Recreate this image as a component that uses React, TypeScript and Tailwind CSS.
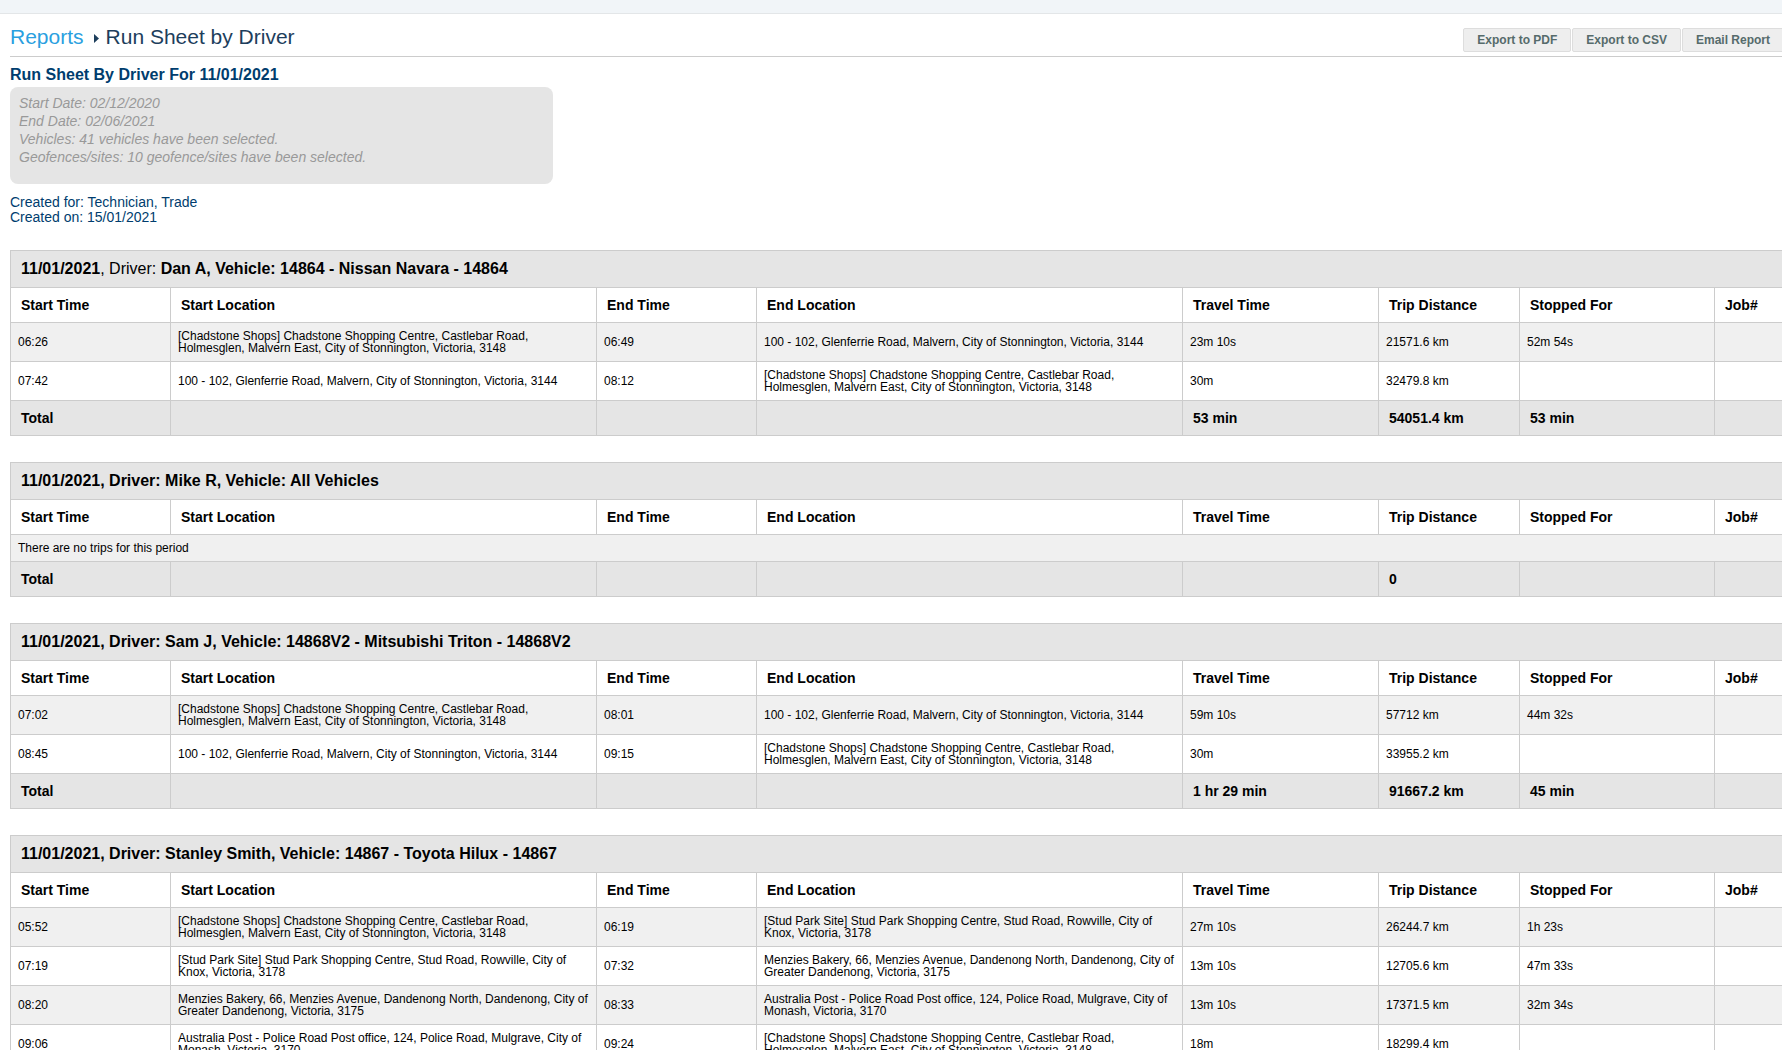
const COL_WIDTHS = [160, 426, 160, 426, 196, 141, 195, 120];

const HEADERS = ["Start Time", "Start Location", "End Time", "End Location", "Travel Time", "Trip Distance", "Stopped For", "Job#"];

const CHADSTONE = "[Chadstone Shops] Chadstone Shopping Centre, Castlebar Road, Holmesglen, Malvern East, City of Stonnington, Victoria, 3148";
const GLENFERRIE = "100 - 102, Glenferrie Road, Malvern, City of Stonnington, Victoria, 3144";
const STUD_PARK = "[Stud Park Site] Stud Park Shopping Centre, Stud Road, Rowville, City of Knox, Victoria, 3178";
const MENZIES = "Menzies Bakery, 66, Menzies Avenue, Dandenong North, Dandenong, City of Greater Dandenong, Victoria, 3175";
const AUSPOST = "Australia Post - Police Road Post office, 124, Police Road, Mulgrave, City of Monash, Victoria, 3170";

type Trip = string[];

type Group = {
  title: React.ReactNode;
  trips: Trip[];
  totals: [string, string, string];
};

const GROUPS: Group[] = [
  {
    title: (
      <>
        11/01/2021<span className="font-normal">, Driver: </span>Dan A, Vehicle: 14864 - Nissan Navara - 14864
      </>
    ),
    trips: [
      ["06:26", CHADSTONE, "06:49", GLENFERRIE, "23m 10s", "21571.6 km", "52m 54s", ""],
      ["07:42", GLENFERRIE, "08:12", CHADSTONE, "30m", "32479.8 km", "", ""],
    ],
    totals: ["53 min", "54051.4 km", "53 min"],
  },
  {
    title: "11/01/2021, Driver: Mike R, Vehicle: All Vehicles",
    trips: [],
    totals: ["", "0", ""],
  },
  {
    title: "11/01/2021, Driver: Sam J, Vehicle: 14868V2 - Mitsubishi Triton - 14868V2",
    trips: [
      ["07:02", CHADSTONE, "08:01", GLENFERRIE, "59m 10s", "57712 km", "44m 32s", ""],
      ["08:45", GLENFERRIE, "09:15", CHADSTONE, "30m", "33955.2 km", "", ""],
    ],
    totals: ["1 hr 29 min", "91667.2 km", "45 min"],
  },
  {
    title: "11/01/2021, Driver: Stanley Smith, Vehicle: 14867 - Toyota Hilux - 14867",
    trips: [
      ["05:52", CHADSTONE, "06:19", STUD_PARK, "27m 10s", "26244.7 km", "1h 23s", ""],
      ["07:19", STUD_PARK, "07:32", MENZIES, "13m 10s", "12705.6 km", "47m 33s", ""],
      ["08:20", MENZIES, "08:33", AUSPOST, "13m 10s", "17371.5 km", "32m 34s", ""],
      ["09:06", AUSPOST, "09:24", CHADSTONE, "18m", "18299.4 km", "", ""],
    ],
    totals: ["", "", ""],
  },
];

function RunTable({ group }: { group: Group }) {
  return (
    <table className="mb-[26px] w-[1824px] table-fixed border-collapse text-black">
      <colgroup>
        {COL_WIDTHS.map((w, i) => (
          <col key={i} style={{ width: w }} />
        ))}
      </colgroup>
      <thead>
        <tr className="h-[37px] bg-[#e5e5e5]">
          <th colSpan={8} className="border border-[#ccc] pl-[10px] text-left text-base font-bold">
            {group.title}
          </th>
        </tr>
        <tr className="h-[35px]">
          {HEADERS.map((h) => (
            <th key={h} className="border border-[#ccc] pl-[10px] text-left text-sm font-bold">
              {h}
            </th>
          ))}
        </tr>
      </thead>
      <tbody>
        {group.trips.map((trip, i) => (
          <tr key={i} className={i % 2 === 0 ? "h-[39px] bg-[#f0f0f0]" : "h-[39px] bg-white"}>
            {trip.map((cell, j) => (
              <td key={j} className="border border-[#ccc] px-[7px] text-xs leading-[12px]">
                {cell}
              </td>
            ))}
          </tr>
        ))}
        {group.trips.length === 0 && (
          <tr className="h-[27px] bg-[#f0f0f0]">
            <td colSpan={8} className="border border-[#ccc] px-[7px] text-xs leading-[12px]">
              There are no trips for this period
            </td>
          </tr>
        )}
        <tr className="h-[35px] bg-[#e5e5e5] text-sm font-bold">
          <td className="border border-[#ccc] pl-[10px]">Total</td>
          <td className="border border-[#ccc]" />
          <td className="border border-[#ccc]" />
          <td className="border border-[#ccc]" />
          <td className="border border-[#ccc] pl-[10px]">{group.totals[0]}</td>
          <td className="border border-[#ccc] pl-[10px]">{group.totals[1]}</td>
          <td className="border border-[#ccc] pl-[10px]">{group.totals[2]}</td>
          <td className="border border-[#ccc]" />
        </tr>
      </tbody>
    </table>
  );
}

function ExportButton({ label }: { label: string }) {
  return (
    <button className="h-[24px] rounded-[2px] border border-[#ddd] bg-[#eee] px-[13px] text-xs font-bold text-[#566b6b]">
      {label}
    </button>
  );
}

export default function App() {
  return (
    <div className="h-[1050px] w-[1782px] overflow-hidden bg-white font-['Liberation_Sans',Arial,sans-serif]">
      <div className="h-[14px] border-b border-[#e3e6e8] bg-[#f1f5f8]" />

      <div className="w-[1800px] pl-[10px]">
        <div className="flex h-[43px] items-end justify-between border-b border-[#ccc] pr-[16px]">
          <div className="flex items-center pb-[5px] text-[21px] leading-[28px] text-[#1d3e5c]">
            <a className="text-[#2a9fe0]">Reports</a>
            <svg width="5" height="9" viewBox="0 0 5 9" className="mr-[7px] ml-[10px] mt-[2px]">
              <path d="M0 0l5 4.5L0 9z" fill="#1d3e5c" />
            </svg>
            <span>Run Sheet by Driver</span>
          </div>
          <div className="flex gap-[1px] pb-[4px]">
            <ExportButton label="Export to PDF" />
            <ExportButton label="Export to CSV" />
            <ExportButton label="Email Report" />
          </div>
        </div>

        <h2 className="mt-[8px] text-base leading-[19px] font-bold text-[#003d6e]">Run Sheet By Driver For 11/01/2021</h2>

        <div className="mt-[3px] h-[97px] w-[543px] rounded-lg bg-[#e5e5e5] py-[7px] pl-[9px] text-sm leading-[18px] text-[#999] italic">
          <p>Start Date: 02/12/2020</p>
          <p>End Date: 02/06/2021</p>
          <p>Vehicles: 41 vehicles have been selected.</p>
          <p>Geofences/sites: 10 geofence/sites have been selected.</p>
        </div>

        <div className="mt-[11px] mb-[25px] text-sm leading-[15px] font-medium text-[#003d6e]">
          <p>Created for: Technician, Trade</p>
          <p>Created on: 15/01/2021</p>
        </div>

        {GROUPS.map((group, i) => (
          <RunTable key={i} group={group} />
        ))}
      </div>
    </div>
  );
}
